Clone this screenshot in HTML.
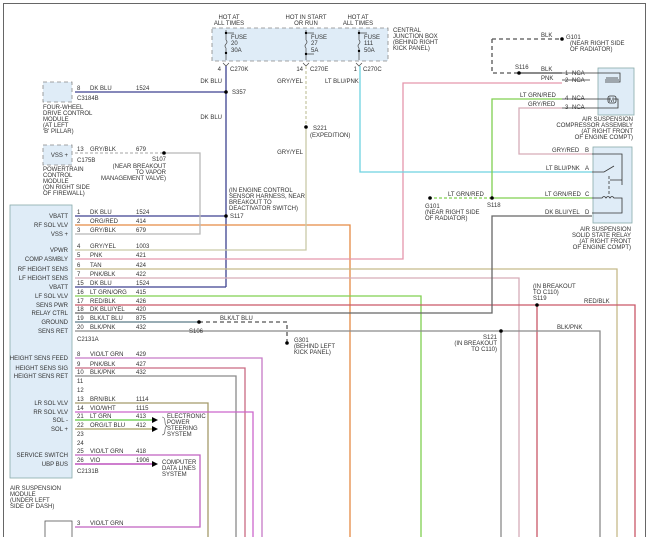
<!DOCTYPE html>
<html><head><meta charset="utf-8"><style>
html,body{margin:0;padding:0;background:#fff;}
svg{display:block;font-family:"Liberation Sans",sans-serif;}
text{font-size:6px;fill:#333;}
</style></head><body>
<svg width="650" height="537" viewBox="0 0 650 537" xmlns="http://www.w3.org/2000/svg">
<rect x="0" y="0" width="650" height="537" fill="#fff"/>
<rect x="3.5" y="3.5" width="642" height="540" fill="none" stroke="#666" stroke-width="1"/>

<!-- central junction box -->
<rect x="212" y="28" width="176" height="33" fill="#dfecf7" stroke="#888" stroke-width="0.8" stroke-dasharray="4,3"/>
<g stroke="#444" stroke-width="0.7" fill="none">
<path d="M226 30V40 M226 40q2 2 0 4q-2 2 0 4 M226 48V60"/>
<path d="M306 30V40 M306 40q2 2 0 4q-2 2 0 4 M306 48V60"/>
<path d="M359 30V40 M359 40q2 2 0 4q-2 2 0 4 M359 48V60"/>
<path d="M226 33h8 M306 33h8 M359 33h8 M306 54h8"/>
<path d="M223 63l3 3l3-3 M303 63l3 3l3-3 M356 63l3 3l3-3"/>
</g>
<g fill="#000"><circle cx="226" cy="33" r="1.2"/><circle cx="306" cy="33" r="1.2"/><circle cx="359" cy="33" r="1.2"/><circle cx="226" cy="53" r="1.2"/><circle cx="306" cy="54" r="1.2"/><circle cx="359" cy="51" r="1.2"/></g>
<text x="229" y="19" text-anchor="middle">HOT AT</text><text x="229" y="25" text-anchor="middle">ALL TIMES</text>
<text x="306" y="19" text-anchor="middle">HOT IN START</text><text x="306" y="25" text-anchor="middle">OR RUN</text>
<text x="358" y="19" text-anchor="middle">HOT AT</text><text x="358" y="25" text-anchor="middle">ALL TIMES</text>
<text x="231" y="39">FUSE</text><text x="231" y="45">20</text><text x="231" y="52">30A</text>
<text x="311" y="39">FUSE</text><text x="311" y="45">27</text><text x="311" y="52">5A</text>
<text x="364" y="39">FUSE</text><text x="364" y="45">111</text><text x="364" y="52">50A</text>
<text x="393" y="32">CENTRAL</text><text x="393" y="38">JUNCTION BOX</text><text x="393" y="44">(BEHIND RIGHT</text><text x="393" y="50">KICK PANEL)</text>
<text x="221" y="71" text-anchor="end">4</text><text x="230" y="71">C270K</text>
<text x="303" y="71" text-anchor="end">14</text><text x="310" y="71">C270E</text>
<text x="357" y="71" text-anchor="end">1</text><text x="363" y="71">C270C</text>

<!-- wires -->
<g fill="none" stroke-width="1.3">
<path d="M226 66V287M75 92H226M75 216H226M75 287H226" stroke="#3d4290"/>
<path d="M75 225H350V537" stroke="#e58a44"/>
<path d="M75 234H200V153H164" stroke="#b8b8b8"/>
<path d="M75 153H164" stroke="#b8b8b8" stroke-dasharray="3,2"/>
<path d="M306 66V127" stroke="#c9c9a8" stroke-dasharray="3,2"/>
<path d="M306 127V250H75" stroke="#c9c9a8"/>
<path d="M75 259H403V83H562" stroke="#e596ac"/>
<path d="M75 269H617V537" stroke="#c5ba8a"/>
<path d="M75 278H519V537" stroke="#d6acb8"/>
<path d="M75 296H421V537" stroke="#80d050"/>
<path d="M75 305H635V537M537 305V537" stroke="#c95868"/>
<path d="M75 313H492V216H592" stroke="#666"/>
<path d="M75 322H199" stroke="#5b7a88"/>
<path d="M199 322H287V343" stroke="#555" stroke-dasharray="4,3"/>
<path d="M75 331H600V537M501 331V537" stroke="#8a8a8a"/>
<path d="M360 66V172H592" stroke="#6ed2e0"/>
<path d="M519 73H562" stroke="#444"/>
<path d="M492 39H560M492 39V73H519" stroke="#555" stroke-dasharray="4,3"/>
<path d="M562 99H492V198H592" stroke="#80d050"/>
<path d="M492 198H430" stroke="#80d050" stroke-dasharray="3,2"/>
<path d="M562 108H519V154H592" stroke="#d6acb8"/>
<path d="M75 358H262V537" stroke="#c77ac7"/>
<path d="M75 368H245V537" stroke="#c96a82"/>
<path d="M75 376H236V537" stroke="#8a8a8a"/>
<path d="M75 403H208V537" stroke="#a59a6a"/>
<path d="M75 412H253V537" stroke="#cc66cc"/>
<path d="M75 420H152" stroke="#5ecc40"/>
<path d="M75 429H152" stroke="#a8a060"/>
<path d="M75 455H200V527H75" stroke="#c060c0"/>
<path d="M75 464H152" stroke="#b030b0"/>
</g>
<g fill="#000"><path d="M152 417l6 3l-6 3z M152 426l6 3l-6 3z M152 461l6 3l-6 3z"/></g>
<path d="M162 417q3 0 3 5q0 3 2 4q-2 1-2 4q0 5-3 5" fill="none" stroke="#444" stroke-width="0.6"/>

<!-- splice dots -->
<g fill="#000">
<circle cx="226" cy="92" r="1.8"/><circle cx="226" cy="216" r="1.8"/><circle cx="164" cy="153" r="1.8"/>
<circle cx="306" cy="127" r="1.8"/><circle cx="199" cy="322" r="1.8"/><circle cx="287" cy="343" r="1.8"/>
<circle cx="537" cy="305" r="1.8"/><circle cx="501" cy="331" r="1.8"/><circle cx="519" cy="73" r="1.8"/>
<circle cx="492" cy="198" r="1.8"/><circle cx="430" cy="198" r="1.8"/><circle cx="562" cy="39" r="1.8"/>
</g>

<!-- modules -->
<rect x="10" y="205" width="62" height="273" fill="#dfecf7" stroke="#8aa" stroke-width="0.8"/>
<rect x="43" y="82" width="29" height="20" fill="#dfecf7" stroke="#888" stroke-width="0.8" stroke-dasharray="4,3"/>
<rect x="43" y="145" width="29" height="20" fill="#dfecf7" stroke="#888" stroke-width="0.8" stroke-dasharray="4,3"/>
<rect x="45" y="521" width="27" height="20" fill="#fff" stroke="#555" stroke-width="0.8"/>
<rect x="598" y="68" width="36" height="47" fill="#dfecf7" stroke="#8aa" stroke-width="0.8"/>
<rect x="593" y="147" width="39" height="76" fill="#dfecf7" stroke="#8aa" stroke-width="0.8"/>
<g fill="none" stroke="#333" stroke-width="0.8">
<path d="M562 73H620V82H605M562 80H590 M562 99H610 M562 108H618V99H614"/>
<rect x="608" y="96" width="8" height="7" rx="2"/>
<path d="M605 80h14 M606 78h12"/>
<path d="M592 154H622V185 M592 172H604l10-6 M610 180h12 M592 198H602q2-3 4 0q2-3 4 0q2-3 4 0h8V213H592"/>
<path d="M609 176v18" stroke-dasharray="3,2"/>
</g>
<text x="609" y="102" font-size="5">M</text>

<!-- module labels -->
<g text-anchor="end">
<text x="68" y="218">VBATT</text><text x="68" y="227">RF SOL VLV</text><text x="68" y="236">VSS +</text>
<text x="68" y="252">VPWR</text><text x="68" y="261">COMP ASMBLY</text><text x="68" y="271">RF HEIGHT SENS</text>
<text x="68" y="280">LF HEIGHT SENS</text><text x="68" y="289">VBATT</text><text x="68" y="298">LF SOL VLV</text>
<text x="68" y="307">SENS PWR</text><text x="68" y="315">RELAY CTRL</text><text x="68" y="324">GROUND</text>
<text x="68" y="333">SENS RET</text><text x="68" y="360">HEIGHT SENS FEED</text><text x="68" y="370">HEIGHT SENS SIG</text>
<text x="68" y="378">HEIGHT SENS RET</text><text x="68" y="405">LR SOL VLV</text><text x="68" y="414">RR SOL VLV</text>
<text x="68" y="422">SOL -</text><text x="68" y="431">SOL +</text><text x="68" y="457">SERVICE SWITCH</text>
<text x="68" y="466">UBP BUS</text><text x="68" y="157">VSS +</text>
</g>

<!-- pin numbers / colors / circuits -->
<g>
<text x="77" y="90">8</text><text x="90" y="90">DK BLU</text><text x="136" y="90">1524</text><text x="77" y="100">C3184B</text>
<text x="77" y="151">13</text><text x="90" y="151">GRY/BLK</text><text x="136" y="151">679</text><text x="77" y="162">C175B</text>
<text x="77" y="214">1</text><text x="90" y="214">DK BLU</text><text x="136" y="214">1524</text>
<text x="77" y="223">2</text><text x="90" y="223">ORG/RED</text><text x="136" y="223">414</text>
<text x="77" y="232">3</text><text x="90" y="232">GRY/BLK</text><text x="136" y="232">679</text>
<text x="77" y="248">4</text><text x="90" y="248">GRY/YEL</text><text x="136" y="248">1003</text>
<text x="77" y="257">5</text><text x="90" y="257">PNK</text><text x="136" y="257">421</text>
<text x="77" y="267">6</text><text x="90" y="267">TAN</text><text x="136" y="267">424</text>
<text x="77" y="276">7</text><text x="90" y="276">PNK/BLK</text><text x="136" y="276">422</text>
<text x="77" y="285">15</text><text x="90" y="285">DK BLU</text><text x="136" y="285">1524</text>
<text x="77" y="294">16</text><text x="90" y="294">LT GRN/ORG</text><text x="136" y="294">415</text>
<text x="77" y="303">17</text><text x="90" y="303">RED/BLK</text><text x="136" y="303">426</text>
<text x="77" y="311">18</text><text x="90" y="311">DK BLU/YEL</text><text x="136" y="311">420</text>
<text x="77" y="320">19</text><text x="90" y="320">BLK/LT BLU</text><text x="136" y="320">875</text>
<text x="77" y="329">20</text><text x="90" y="329">BLK/PNK</text><text x="136" y="329">432</text>
<text x="77" y="341">C2131A</text>
<text x="77" y="356">8</text><text x="90" y="356">VIO/LT GRN</text><text x="136" y="356">429</text>
<text x="77" y="366">9</text><text x="90" y="366">PNK/BLK</text><text x="136" y="366">427</text>
<text x="77" y="374">10</text><text x="90" y="374">BLK/PNK</text><text x="136" y="374">432</text>
<text x="77" y="383">11</text><text x="77" y="392">12</text>
<text x="77" y="401">13</text><text x="90" y="401">BRN/BLK</text><text x="136" y="401">1114</text>
<text x="77" y="410">14</text><text x="90" y="410">VIO/WHT</text><text x="136" y="410">1115</text>
<text x="77" y="418">21</text><text x="90" y="418">LT GRN</text><text x="136" y="418">413</text>
<text x="77" y="427">22</text><text x="90" y="427">ORG/LT BLU</text><text x="136" y="427">412</text>
<text x="77" y="436">23</text><text x="77" y="445">24</text>
<text x="77" y="453">25</text><text x="90" y="453">VIO/LT GRN</text><text x="136" y="453">418</text>
<text x="77" y="462">26</text><text x="90" y="462">VIO</text><text x="136" y="462">1906</text>
<text x="77" y="473">C2131B</text>
<text x="77" y="525">3</text><text x="90" y="525">VIO/LT GRN</text>
</g>

<!-- descriptive labels -->
<g>
<text x="43" y="109">FOUR-WHEEL</text><text x="43" y="115">DRIVE CONTROL</text><text x="43" y="121">MODULE</text><text x="43" y="127">(AT LEFT</text><text x="43" y="133">'B' PILLAR)</text>
<text x="43" y="171">POWERTRAIN</text><text x="43" y="177">CONTROL</text><text x="43" y="183">MODULE</text><text x="43" y="189">(ON RIGHT SIDE</text><text x="43" y="195">OF FIREWALL)</text>
<text x="10" y="490">AIR SUSPENSION</text><text x="10" y="496">MODULE</text><text x="10" y="502">(UNDER LEFT</text><text x="10" y="508">SIDE OF DASH)</text>
<text x="222" y="83" text-anchor="end">DK BLU</text><text x="222" y="119" text-anchor="end">DK BLU</text><text x="232" y="94">S357</text>
<text x="303" y="83" text-anchor="end">GRY/YEL</text><text x="303" y="154" text-anchor="end">GRY/YEL</text>
<text x="313" y="130">S221</text><text x="310" y="137">(EXPEDITION)</text>
<text x="325" y="83">LT BLU/PNK</text>
<text x="166" y="161" text-anchor="end">S107</text><text x="166" y="168" text-anchor="end">(NEAR BREAKOUT</text><text x="166" y="174" text-anchor="end">TO VAPOR</text><text x="166" y="180" text-anchor="end">MANAGEMENT VALVE)</text>
<text x="229" y="192">(IN ENGINE CONTROL</text><text x="229" y="198">SENSOR HARNESS, NEAR</text><text x="229" y="204">BREAKOUT TO</text><text x="229" y="210">DEACTIVATOR SWITCH)</text><text x="230" y="218">S117</text>
<text x="220" y="320">BLK/LT BLU</text><text x="189" y="333">S106</text>
<text x="294" y="342">G301</text><text x="294" y="348">(BEHIND LEFT</text><text x="294" y="354">KICK PANEL)</text>
<text x="167" y="418">ELECTRONIC</text><text x="167" y="424">POWER</text><text x="167" y="430">STEERING</text><text x="167" y="436">SYSTEM</text>
<text x="162" y="464">COMPUTER</text><text x="162" y="470">DATA LINES</text><text x="162" y="476">SYSTEM</text>
<text x="533" y="288">(IN BREAKOUT</text><text x="533" y="294">TO C110)</text><text x="533" y="300">S119</text><text x="584" y="303">RED/BLK</text>
<text x="497" y="339" text-anchor="end">S121</text><text x="497" y="345" text-anchor="end">(IN BREAKOUT</text><text x="497" y="351" text-anchor="end">TO C110)</text>
<text x="557" y="329">BLK/PNK</text>
<text x="541" y="37">BLK</text><text x="566" y="39">G101</text><text x="570" y="45">(NEAR RIGHT SIDE</text><text x="570" y="51">OF RADIATOR)</text>
<text x="515" y="69">S116</text><text x="541" y="71">BLK</text><text x="541" y="80">PNK</text>
<text x="565" y="75">1</text><text x="572" y="75">NCA</text><text x="565" y="82">2</text><text x="572" y="82">NCA</text>
<text x="565" y="100">4</text><text x="572" y="100">NCA</text><text x="565" y="109">3</text><text x="572" y="109">NCA</text>
<text x="520" y="97">LT GRN/RED</text><text x="528" y="106">GRY/RED</text>
<text x="633" y="121" text-anchor="end">AIR SUSPENSION</text><text x="633" y="127" text-anchor="end">COMPRESSOR ASSEMBLY</text><text x="633" y="133" text-anchor="end">(AT RIGHT FRONT</text><text x="633" y="139" text-anchor="end">OF ENGINE COMPT)</text>
<text x="552" y="152">GRY/RED</text><text x="585" y="152">B</text>
<text x="546" y="170">LT BLU/PNK</text><text x="585" y="170">A</text>
<text x="545" y="196">LT GRN/RED</text><text x="585" y="196">C</text>
<text x="545" y="214">DK BLU/YEL</text><text x="585" y="214">D</text>
<text x="448" y="196">LT GRN/RED</text><text x="487" y="207">S118</text>
<text x="425" y="208">G101</text><text x="425" y="214">(NEAR RIGHT SIDE</text><text x="425" y="220">OF RADIATOR)</text>
<text x="631" y="231" text-anchor="end">AIR SUSPENSION</text><text x="631" y="237" text-anchor="end">SOLID STATE RELAY</text><text x="631" y="243" text-anchor="end">(AT RIGHT FRONT</text><text x="631" y="249" text-anchor="end">OF ENGINE COMPT)</text>
</g>
</svg>
</body></html>
